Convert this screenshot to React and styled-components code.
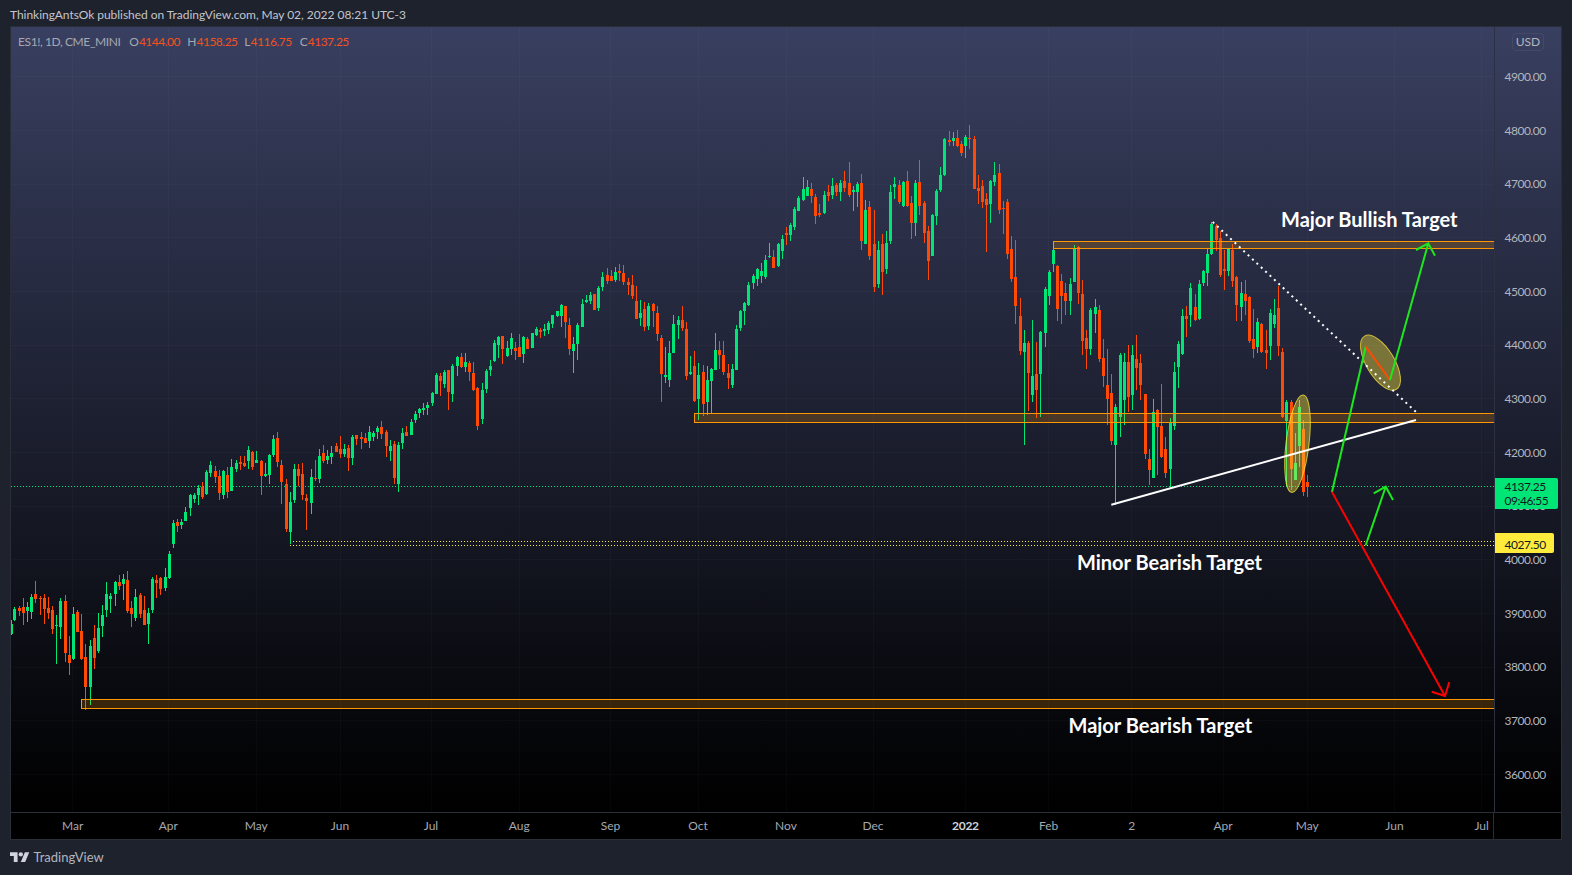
import styled, { createGlobalStyle } from 'styled-components'

const GlobalStyle = createGlobalStyle`
  html, body {
    margin: 0;
    padding: 0;
    background: #1e222d;
  }
  body {
    font-family: Lato, "Open Sans", "Liberation Sans", sans-serif;
    -webkit-font-smoothing: antialiased;
  }
`

const UP = '#00e676'
const DOWN = '#ff4a05'
const ZONE = '#ff9800'
const YELLOW = '#ffeb3b'

// candles read off the chart in chunks: x + colour, then high, body top, body bottom, low
const CHUNKS = [
  {
    ox: 0,
    oy: 400,
    bars: `33g 660 672 702 705,44g 621 627 660 663,58r 618 624 633 648,70r 594 621 639 675,82g 606 621 633 666,
    94g 583 591 636 657,106r 543 582 597 609,121r 588 594 597 645,133r 582 594 627 672,145r 591 624 639 657,
    157r 618 630 687 702,169g 645 675 678 792,181g 594 603 681 717,196r 585 603 759 786,208r 708 765 789 825,
    220g 621 642 777 780,232r 630 636 696 696,244r 642 693 777 780,256r 732 771 861 930,271g 720 738 861 915,
    283r 675 714 774 807,295g 639 684 753 759,307g 615 645 678 711,319g 546 582 630 651,331g 579 588 597 639,
    346g 543 546 582 618,358r 525 546 558 570,370g 522 537 552 600,382r 513 540 633 639,394r 603 624 642 681,
    406g 567 591 654 663,421r 579 585 642 654,433r 588 630 675 675,445g 624 639 672 732,457g 531 537 630 639,
    469r 525 540 549 594,481r 531 534 567 585,496g 504 531 564 573,508g 453 462 534 537,520g 360 369 432 444,
    532r 357 366 378 396,544g 357 366 375 387,556g 321 336 363 363,571g 282 285 324 348,583g 279 285 297 309,
    595g 255 264 285 315,607r 246 261 291 297,619g 210 216 282 285,631g 183 195 219 231,646r 198 213 231 249,
    658r 210 228 279 300,670g 210 213 285 297,682r 201 225 276 294,694g 177 201 273 273,709g 180 189 207 216,
    721r 168 186 192 210,733r 168 189 198 201,745g 138 150 183 207,757r 153 156 201 210,769g 153 180 189 189,
    784r 180 183 228 285,796g 189 222 228 231,808g 162 165 225 252,820g 105 117 165 171,832r 96 114 186 201,
    844r 180 195 246 312,859r 237 252 387 396,871g 276 306 396 432,883g 192 207 300 309,895r 192 207 228 258,
    907r 189 222 285 300,919r 282 294 303 390,934g 207 231 309 342,946r 180 234 237 243,958g 147 168 237 249,
    970r 135 159 183 189,982g 150 168 180 192,994g 138 159 171 192,1009r 129 138 156 156,1021r 108 147 162 174,
    1033g 132 147 162 171,1045r 135 144 174 213,1057g 105 111 174 195,1069r 105 105 117 135,1084r 96 111 117 147,
    1096r 99 114 129 129,1108g 78 96 123 144,1120g 93 99 111 123,1132g 78 84 96 117,1144r 63 81 102 117,
    1159r 90 96 138 171,1171g 120 138 153 183,1183r 123 132 234 252,1195g 126 135 252 276,1207g 84 99 129 147,
    1219r 78 96 108 108,1234g 57 66 105 105,1246g 33 42 60 69,1258g 24 27 39 54`,
  },
  {
    ox: 400,
    oy: 230,
    bars: `70g 519 534 540 555,82g 516 525 534 555,97g 486 489 519 528,109g 429 435 492 492,121r 430 438 453 498,
    133g 420 426 462 474,145r 420 420 486 540,157g 402 408 492 516,172g 378 381 408 438,184r 369 381 411 414,
    196g 369 396 411 426,208r 393 399 426 453,220r 396 429 480 483,232r 471 474 588 600,247g 459 480 567 582,
    259g 417 423 477 489,271g 390 408 420 438,283g 330 339 393 396,295g 318 321 345 384,307r 318 318 357 402,
    322g 333 354 378 381,334g 309 324 357 375,346r 336 354 363 390,358r 312 351 381 381,370g 318 321 372 399,
    382r 321 327 357 357,397g 309 309 354 354,409g 291 297 315 318,421r 294 300 306 324,433g 282 297 303 318,
    445g 273 279 300 312,457g 255 255 282 294,472g 243 243 258 261,484g 222 225 258 291,496r 228 228 276 324,
    508r 264 285 357 375,520g 321 342 363 429,532g 279 285 342 390,547g 207 222 291 291,559g 195 210 216 219,
    571g 186 195 213 222,583r 192 192 240 240,595g 168 174 234 243,607g 126 141 171 183,622r 114 135 153 162,
    634r 120 138 153 153,646g 111 126 150 156,658r 102 123 129 153,670r 105 129 156 165,685r 144 156 165 195,
    697r 135 165 198 207,709r 168 213 267 267,721g 210 249 264 288,733r 216 237 291 303,745g 219 228 288 300,
    760r 219 222 243 291,772r 228 249 312 333,784r 315 324 432 516,796g 351 435 441 459,808g 333 369 450 471,
    820g 255 282 369 369,835g 258 270 285 327,847r 228 270 294 303,859r 276 297 438 450,871g 378 426 432 435,
    883r 363 408 513 516,895g 399 435 507 570,910r 405 426 522 558,922g 408 450 516 555,934g 414 417 453 552,
    946g 309 360 420 420,958r 333 360 375 417,970r 333 375 426 435,985r 402 429 444 477,997g 402 417 465 474,
    1009g 285 297 420 420`,
  },
  {
    ox: 720,
    oy: 110,
    bars: `61g 600 603 654 663,73g 575 579 603 645,85g 516 525 585 588,100g 492 498 519 537,112g 474 477 507 528,
    124g 459 483 498 519,136g 435 450 501 507,148g 399 438 441 444,160r 420 441 474 474,175g 399 402 468 471,
    187g 375 387 423 447,199r 351 369 375 405,211g 339 345 375 393,223g 291 297 351 360,235g 258 264 303 303,
    250g 201 237 270 273,262g 210 231 258 258,274r 219 237 258 279,286r 252 261 318 342,298r 282 309 315 321,
    313g 243 255 309 312,325r 225 246 258 273,337g 204 228 255 267,349r 219 225 246 258,361g 210 219 246 273,
    373r 183 213 234 246,388r 156 219 255 261,400g 228 240 246 303,412g 216 222 246 291,424r 192 219 393 420,
    436g 270 300 402 402,448r 273 291 438 450,463r 300 402 531 546,475g 393 420 522 534,487r 372 402 486 555,
    499g 363 399 477 492,511g 225 246 393 402,523g 201 222 231 267,538r 210 225 276 282,550g 213 216 288 291,
    562r 183 213 288 291,574r 258 279 339 387,586g 210 219 339 378,598r 150 216 288 315,613r 273 279 369 399,
    625r 348 363 453 510,637g 312 315 438 438,649g 237 243 318 345,661g 171 195 240 246,673g 84 87 195 198,
    688r 63 90 96 108,700g 66 84 93 108,712r 60 84 108 111,724r 93 102 129 138,736g 75 81 108 144,
    748r 45 84 87 117,763r 78 87 237 237,775r 195 234 243 282,787r 210 228 276 294,799r 249 267 285 426,
    811g 210 213 282 339,823g 156 195 216 228,838r 162 189 300 312,850r 273 294 297 372,862r 267 276 432 447,
    874r 378 417 507 516`,
  },
  {
    ox: 1000,
    oy: 200,
    bars: `46r 120 231 318 372,61r 294 348 453 465,73g 390 429 456 735,85r 423 429 519 633,97g 360 528 585 606,
    109r 426 522 570 654,121g 393 396 522 651,136g 261 267 399 441,148g 210 216 288 315,160g 123 150 192 216,
    172r 195 198 327 363,184r 222 243 288 372,196r 249 279 303 345,211g 234 252 303 345,223g 135 147 246 246,
    235r 138 141 279 312,247r 240 282 423 465,259r 390 414 447 507,271g 324 330 447 465,286g 297 321 342 399,
    298r 315 330 477 486,310r 417 474 528 561,322r 447 555 597 675,334r 522 579 723 735,346g 612 621 735 915,
    361g 459 465 651 711,373g 459 486 600 675,385r 435 486 591 636,397g 435 465 585 630,409r 405 477 504 570,
    421r 462 489 555 600,436r 582 582 762 777,448r 747 777 810 855,460g 597 636 834 834,472r 627 630 681 825,
    484r 552 678 771 774,496r 711 747 819 834,511g 654 666 807 865,523g 486 516 678 690,535g 423 432 501 564,
    547g 327 348 462 465,559r 318 348 357 411,571g 249 264 345 381,586r 282 321 360 363,598g 240 252 357 360,
    610g 210 213 249 258,622g 147 162 219 258,634g 66 72 162 165,649r 72 78 120 153,661r 93 114 225 231,
    673r 150 207 213 270,685g 144 147 213 228,697r 132 150 243 261,709r 228 231 315 363,724g 246 279 321 363,
    736r 240 282 303 345,748r 288 291 423 429,760r 327 417 447 474,772g 354 366 441 459,784r 369 372 456 459,
    799r 390 450 459 507,811g 327 339 438 480,823g 297 345 372 384,835r 258 324 438 468,847r 444 456 651 654,
    859g 600 606 663 860,874r 600 606 807 870,886g 699 789 840 840,898g 600 621 738 800,910r 660 687 876 888,
    922r 825 846 861 891`,
  },
]

const candles = CHUNKS.flatMap(({ ox, oy, bars }) =>
  bars.split(',').map((raw) => {
    const [head, high, top, bottom, low] = raw.trim().split(' ')
    const y = (v) => Math.round(oy + Number(v) / 3)
    return {
      x: Math.floor(ox + parseInt(head, 10) / 3),
      up: head.endsWith('g'),
      high: y(high),
      top: y(top),
      bottom: y(bottom),
      low: y(low),
    }
  })
)

const PRICES = [4900, 4800, 4700, 4600, 4500, 4400, 4300, 4200, 4100, 4000, 3900, 3800, 3700, 3600]
const priceY = (p) => 76.7 + ((4900 - p) * 53.67) / 100

const TICKS = [
  ['Mar', 72.7], ['Apr', 168.3], ['May', 256.3], ['Jun', 340], ['Jul', 431], ['Aug', 519.3],
  ['Sep', 610.5], ['Oct', 698], ['Nov', 786], ['Dec', 873], ['2022', 965.4, true], ['Feb', 1048.6],
  ['2', 1131.8], ['Apr', 1223], ['May', 1307.3], ['Jun', 1394.5], ['Jul', 1481.7],
]

const Page = styled.div`
  width: 1572px;
  height: 875px;
  overflow: hidden;
  background: #1e222d;
  color: #b2b5be;
`
const Header = styled.div`
  height: 26px;
  padding-left: 10px;
  display: flex;
  align-items: center;
  font-size: 12px;
  letter-spacing: -0.04px;
  color: #c3c5cc;
  padding-top: 3px;
  box-sizing: border-box;
`
const Frame = styled.div`
  width: 1552px;
  margin-left: 10px;
  box-sizing: border-box;
  border: 1px solid #2a2e39;
  background: #000;
`
const ChartRow = styled.div`
  display: flex;
  height: 785px;
  background: linear-gradient(180deg, #393f60 0%, #000 100%);
`
const Plot = styled.div`
  position: relative;
  width: 1483px;
  overflow: hidden;
`
const ChartSvg = styled.svg`
  display: block;
`
const Legend = styled.div`
  position: absolute;
  left: 7px;
  top: 7px;
  display: flex;
  font-size: 12px;
  line-height: 15px;
  color: #a5a8b2;
`
const LegendName = styled.span`
  width: 111.3px;
  white-space: nowrap;
  flex: none;
  letter-spacing: -0.4px;
`
const LegendItem = styled.span`
  display: flex;
  flex: none;
  justify-content: space-between;
  width: ${(p) => p.$width}px;
  margin-right: 8px;
`
const Value = styled.span`
  color: #f4511e;
  letter-spacing: -0.5px;
`
const Annotation = styled.div`
  position: absolute;
  left: ${(p) => p.$x}px;
  top: ${(p) => p.$y}px;
  font-size: 20px;
  line-height: 26px;
  font-weight: 700;
  color: #fff;
  white-space: nowrap;
`
const PriceAxis = styled.div`
  position: relative;
  flex: 1;
  border-left: 1px solid #2c3040;
  padding-top: 22.7px;
  overflow: hidden;
`
const PriceLabel = styled.div`
  height: 53.67px;
  display: flex;
  align-items: center;
  padding-left: 9.5px;
  font-size: 12px;
  letter-spacing: -0.5px;
`
const CurrencyBadge = styled.div`
  position: absolute;
  left: 17px;
  top: 5.5px;
  width: 32px;
  height: 18px;
  box-sizing: border-box;
  border: 1px solid #444a66;
  border-radius: 4px;
  display: flex;
  align-items: center;
  justify-content: center;
  font-size: 12px;
`
const PriceTag = styled.div`
  position: absolute;
  left: 0;
  top: ${(p) => p.$top}px;
  width: ${(p) => p.$width}px;
  box-sizing: border-box;
  padding: ${(p) => p.$padding};
  background: ${(p) => p.$color};
  color: #131722;
  font-size: 12px;
  letter-spacing: -0.5px;
  line-height: 14px;
  border-radius: 0 2px 2px 0;
`
const TimeAxis = styled.div`
  position: relative;
  height: 27px;
  border-top: 1px solid #2a2e39;
  box-sizing: border-box;
  background: #000;
`
const Corner = styled.div`
  position: absolute;
  right: 0;
  top: 0;
  bottom: 0;
  width: 67px;
  border-left: 1px solid #2a2e39;
`
const Tick = styled.span`
  position: absolute;
  left: ${(p) => p.$x - 11}px;
  top: 5px;
  transform: translateX(-50%);
  font-size: 12px;
  line-height: 16px;
  font-weight: ${(p) => (p.$bold ? 700 : 400)};
  letter-spacing: ${(p) => (p.$bold ? '-0.3px' : '0')};
  color: ${(p) => (p.$bold ? '#d1d4dc' : '#a5a8b2')};
`
const Footer = styled.div`
  display: flex;
  align-items: center;
  gap: 4px;
  height: 33px;
  padding-left: 10px;
  font-size: 13px;
  color: #b2b5be;
`

const TvLogo = () => (
  <svg width="19.5" height="10" viewBox="0 4 36 18" fill="#d1d4dc">
    <path d="M14 22H7V11H0V4h14v18zM28 22h-8l7.5-18h8L28 22z" />
    <circle cx="20" cy="8" r="4" />
  </svg>
)

const Candles = () =>
  candles.map((c, i) => {
    const fill = c.up ? UP : DOWN
    return (
      <g key={i} fill={fill} shapeRendering="crispEdges">
        <rect x={c.x} y={c.high} width="1" height={Math.max(c.low - c.high, 1)} />
        <rect x={c.x - 1} y={c.top} width="3" height={Math.max(c.bottom - c.top, 1)} />
      </g>
    )
  })

const Zone = ({ x, y, h }) => (
  <rect x={x} y={y} width={1500 - x} height={h} fill={ZONE} fillOpacity="0.2" stroke={ZONE} strokeWidth="1" shapeRendering="crispEdges" />
)

const Drawings = () => (
  <>
    <Zone x={1053.5} y={241.5} h={7} />
    <Zone x={694.5} y={413.5} h={9} />
    <Zone x={81.5} y={699.5} h={9} />

    <g stroke={YELLOW} strokeWidth="1" strokeDasharray="1 2" shapeRendering="crispEdges">
      <line x1="293" y1="541.5" x2="1494" y2="541.5" />
      <line x1="290" y1="545.5" x2="1494" y2="545.5" />
    </g>

    <ellipse cx="1297.5" cy="443.7" rx="11.5" ry="49" transform="rotate(6.8 1297.5 443.7)" fill={YELLOW} fillOpacity="0.4" stroke={YELLOW} strokeOpacity="0.75" />
    <ellipse cx="1380.5" cy="362.7" rx="14" ry="31" transform="rotate(-31 1380.5 362.7)" fill={YELLOW} fillOpacity="0.4" stroke={YELLOW} strokeOpacity="0.75" />

    <line x1="1111.3" y1="504.7" x2="1416" y2="420" stroke="#fff" strokeWidth="2" />
    <line x1="1212.7" y1="222" x2="1416" y2="412" stroke="#fff" strokeWidth="2" strokeDasharray="2 4" />

    <g fill="none" strokeWidth="2">
      <path d="M1332 492L1365.7 346.7" stroke="#1de81d" />
      <path d="M1365.7 346.7L1390 380" stroke={DOWN} />
      <path d="M1390 380L1428.3 243.3M1416 250L1428.3 243.3L1435 255.7" stroke="#1de81d" />
      <path d="M1365.7 545.3L1385.7 486.7M1373.7 493.3L1385.7 486.7L1393 500" stroke="#1de81d" />
      <path d="M1332 492L1445 696M1431.7 691.7L1445 696L1449.3 682" stroke="#f00" />
    </g>
  </>
)

export default function App() {
  return (
    <Page>
      <GlobalStyle />
      <Header>ThinkingAntsOk published on TradingView.com, May 02, 2022 08:21 UTC-3</Header>
      <Frame>
        <ChartRow>
          <Plot>
            <ChartSvg width="1483" height="785" viewBox="11 27 1483 785">
              <g stroke="#fff" strokeOpacity="0.025" shapeRendering="crispEdges">
                {TICKS.map(([label, x]) => (
                  <line key={label + x} x1={x} x2={x} y1="27" y2="812" />
                ))}
                {PRICES.map((p) => (
                  <line key={p} x1="11" x2="1494" y1={priceY(p)} y2={priceY(p)} />
                ))}
              </g>
              <line x1="11" x2="1494" y1="486.5" y2="486.5" stroke={UP} strokeDasharray="1 2" shapeRendering="crispEdges" />
              <Candles />
              <Drawings />
            </ChartSvg>
            <Legend>
              <LegendName>ES1!, 1D, CME_MINI</LegendName>
              <LegendItem $width={50}>O<Value>4144.00</Value></LegendItem>
              <LegendItem $width={49}>H<Value>4158.25</Value></LegendItem>
              <LegendItem $width={47.4}>L<Value>4116.75</Value></LegendItem>
              <LegendItem $width={49}>C<Value>4137.25</Value></LegendItem>
            </Legend>
            <Annotation $x={1270} $y={178.5}>Major Bullish Target</Annotation>
            <Annotation $x={1066} $y={521.5}>Minor Bearish Target</Annotation>
            <Annotation $x={1057.5} $y={684.5}>Major Bearish Target</Annotation>
          </Plot>
          <PriceAxis>
            <CurrencyBadge>USD</CurrencyBadge>
            {PRICES.map((p) => (
              <PriceLabel key={p}>{p.toFixed(2)}</PriceLabel>
            ))}
            <PriceTag $top={451} $width={63} $color={UP} $padding="2px 0 1px 9.5px">
              4137.25
              <br />
              09:46:55
            </PriceTag>
            <PriceTag $top={506} $width={59} $color={YELLOW} $padding="5px 0 1px 9.5px">
              4027.50
            </PriceTag>
          </PriceAxis>
        </ChartRow>
        <TimeAxis>
          {TICKS.map(([label, x, bold]) => (
            <Tick key={label + x} $x={x} $bold={bold}>{label}</Tick>
          ))}
          <Corner />
        </TimeAxis>
      </Frame>
      <Footer>
        <TvLogo />
        TradingView
      </Footer>
    </Page>
  )
}
